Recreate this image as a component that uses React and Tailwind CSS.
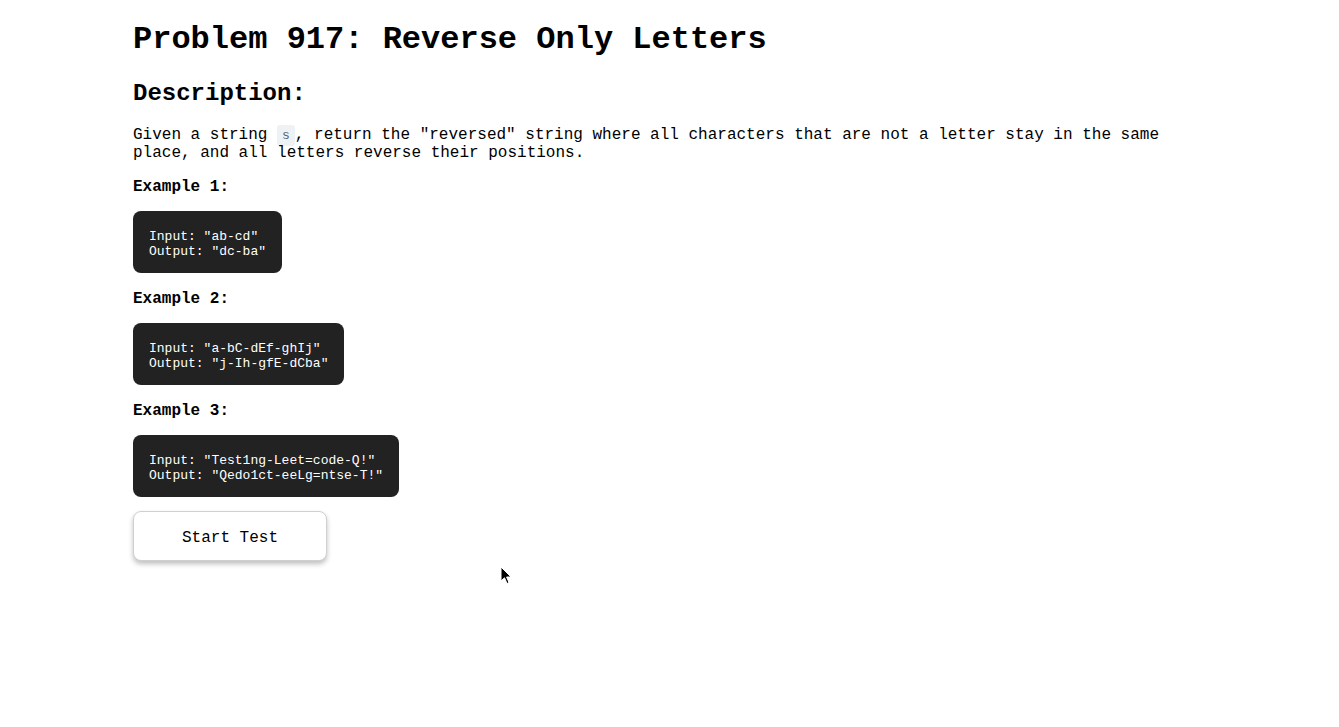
const examples = [
  { input: '"ab-cd"', output: '"dc-ba"' },
  { input: '"a-bC-dEf-ghIj"', output: '"j-Ih-gfE-dCba"' },
  { input: '"Test1ng-Leet=code-Q!"', output: '"Qedo1ct-eeLg=ntse-T!"' },
];

const App = () => {
  return (
    <div className="relative min-h-[727px] bg-white text-black font-['Liberation_Mono','Courier_New',monospace]">
      <div className="mx-auto w-[1073px] pt-[22px]">
        <h1 className="text-[32px] leading-[36px] font-bold">Problem 917: Reverse Only Letters</h1>

        <h2 className="mt-[22px] text-[24px] leading-[27px] font-bold">Description:</h2>

        <p className="mt-[19px] text-[16px] leading-[18px]">
          Given a string{" "}
          <code className="rounded-[3px] bg-[#eef2f5] px-[5px] py-[3px] text-[13px] leading-[13px] text-[#4f6b7d]">s</code>
          , return the "reversed" string where all characters that are not a letter stay in the same
          place, and all letters reverse their positions.
        </p>

        {examples.map((ex, i) => (
          <div key={i}>
            <h3 className={`${i === 0 ? "mt-[16px]" : "mt-[17px]"} text-[16px] leading-[18px] font-bold`}>Example {i + 1}:</h3>
            <pre className="mt-[15px] inline-block rounded-[8px] bg-[#222222] px-[16px] pt-[18px] pb-[14px] text-[13px] leading-[15px] text-white font-['Liberation_Mono','Courier_New',monospace]">
              {`Input: ${ex.input}\nOutput: ${ex.output}`}
            </pre>
          </div>
        ))}

        <button className="mt-[14px] block w-[194px] h-[50px] pt-[3px] rounded-[8px] border border-[#d0d0d0] bg-white text-[16px] leading-[18px] text-black shadow-[0_3px_5px_rgba(0,0,0,0.25)] font-['Liberation_Mono','Courier_New',monospace]">
          Start Test
        </button>
      </div>

      <svg className="absolute left-[500px] top-[566px]" width="12" height="19" viewBox="0 0 12 19">
        <path d="M1 1 L1 15 L4.5 11.8 L7 17.5 L9 16.6 L6.6 11 L11 11 Z" fill="#000" stroke="#fff" strokeWidth="1" />
      </svg>
    </div>
  );
};

export default App;
